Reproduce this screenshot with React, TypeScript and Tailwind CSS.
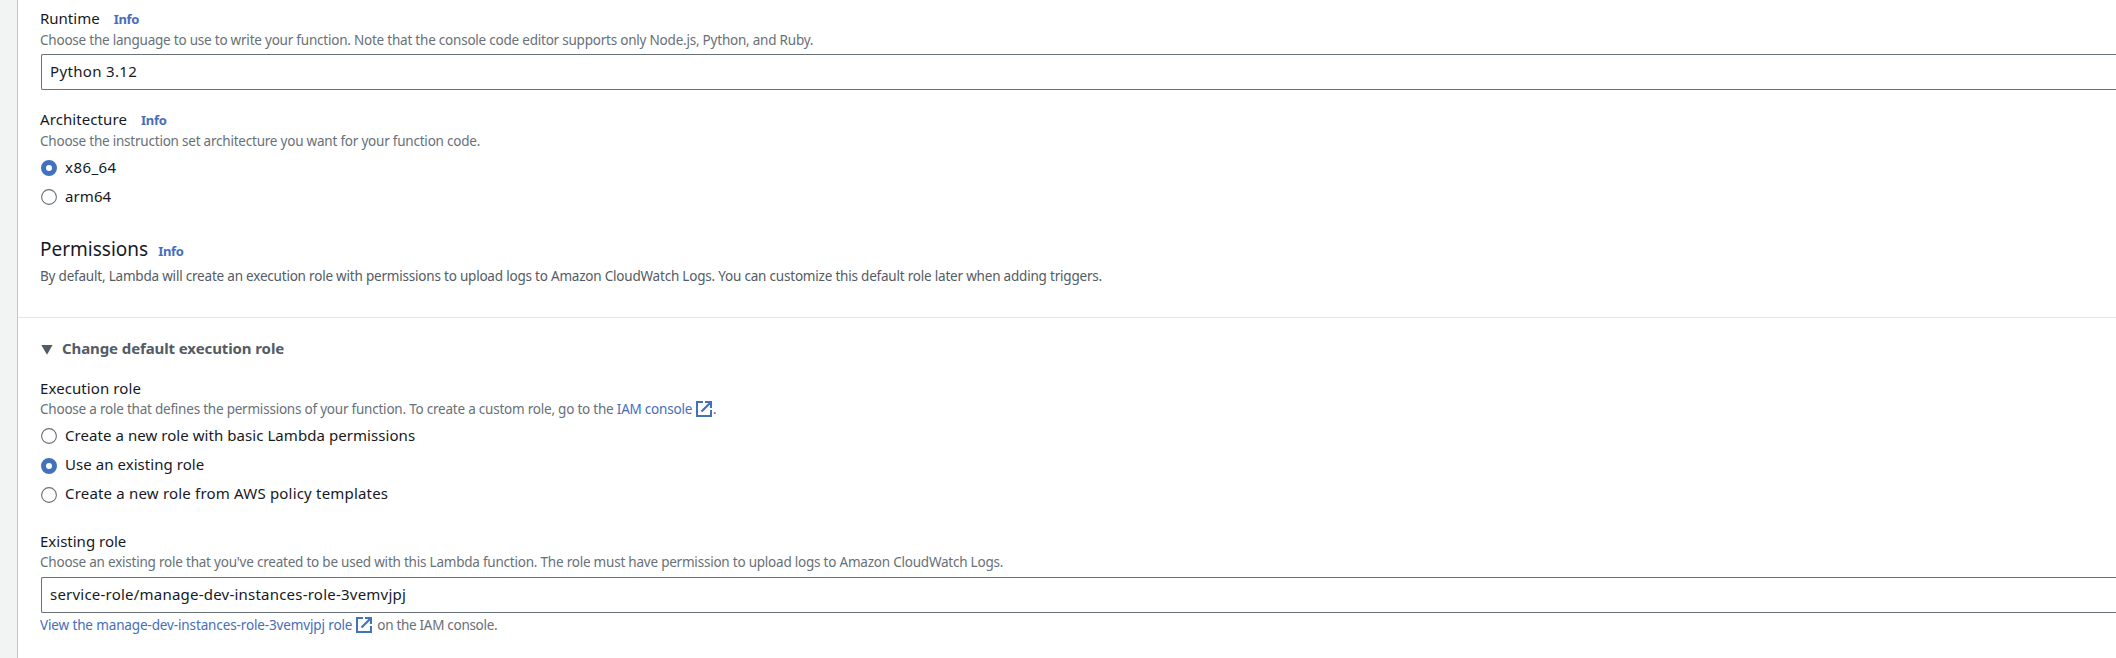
import type { ReactNode } from "react";

function Label({ children, className = "" }: { children: ReactNode; className?: string }) {
  return (
    <div className={`-ml-px flex h-[22px] items-baseline text-[15px] leading-[22px] text-[#16191f] ${className}`}>{children}</div>
  );
}

function Info({ className = "" }: { className?: string }) {
  return (
    <a href="#" className={`text-[13px] font-bold tracking-[-0.3px] text-[#466dbb] ${className}`}>
      Info
    </a>
  );
}

function Hint({
  children,
  className = "",
  color = "text-[#687078]",
}: {
  children: ReactNode;
  className?: string;
  color?: string;
}) {
  return (
    <p className={`-ml-px flex h-5 items-baseline whitespace-pre text-[13.5px] leading-5 tracking-[-0.22px] ${color} ${className}`}>
      {children}
    </p>
  );
}

function Radio({
  label,
  checked = false,
  className = "",
  dotClass = "mt-1",
  textClass = "",
}: {
  label: string;
  checked?: boolean;
  className?: string;
  dotClass?: string;
  textClass?: string;
}) {
  return (
    <label className={`flex h-[22px] items-start text-[15px] leading-[22px] text-[#16191f] ${className}`}>
      <svg viewBox="0 0 16 16" className={`mr-2 size-4 shrink-0 ${dotClass}`}>
        {checked ? (
          <circle cx="8" cy="8" r="5.5" fill="#fff" stroke="#4272bb" strokeWidth="5" />
        ) : (
          <circle cx="8" cy="8" r="7.4" fill="#fff" stroke="#687078" strokeWidth="1.1" />
        )}
      </svg>
      <span className={textClass}>{label}</span>
    </label>
  );
}

function SelectBox({ children, className = "" }: { children: ReactNode; className?: string }) {
  return (
    <div
      className={`h-9 rounded-l-[2px] border border-r-0 border-[#687078] pl-2 text-[15px] leading-[33px] text-[#16191f] ${className}`}
    >
      {children}
    </div>
  );
}

function ExternalIcon({ className = "" }: { className?: string }) {
  return (
    <svg viewBox="0 0 16 16" fill="none" stroke="#4272bb" strokeWidth="2" className={`size-4 shrink-0 ${className}`}>
      <path d="M7 1H1v14h14V9" />
      <path d="M9 1h6v6M15 1L5.5 10.5" strokeWidth="2.2" />
    </svg>
  );
}

export default function App() {
  return (
    <div className="flex h-[658px] w-full overflow-hidden bg-white font-['Noto_Sans',sans-serif]">
      <div className="w-[18px] shrink-0 border-r border-[#c6c6c6] bg-[#f2f3f3]" />
      <main className="min-w-0 flex-1">
        <section className="pt-[7px] pl-[23px]">
          <Label>
            Runtime
            <Info className="ml-[14px]" />
          </Label>
          <Hint className="mt-px">
            Choose the language to use to write your function. Note that the console code editor supports only Node.js, Python, and Ruby.
          </Hint>
          <SelectBox className="mt-1 tracking-[0.33px]">Python 3.12</SelectBox>

          <Label className="mt-[18px]">
            <span className="tracking-[0.09px]">Architecture</span>
            <Info className="ml-[14px]" />
          </Label>
          <Hint className="mt-px">Choose the instruction set architecture you want for your function code.</Hint>
          <Radio label="x86_64" checked className="mt-[5px]" textClass="tracking-[0.45px]" />
          <Radio label="arm64" className="mt-[7px]" textClass="tracking-[0.1px]" />

          <h2 className="mt-7 -ml-px flex h-7 items-baseline text-[19px] leading-7 text-[#16191f]">
            Permissions
            <Info className="ml-[10px]" />
          </h2>
          <Hint className="mt-[3px]" color="text-[#545b64]">
            <span className="tracking-[-0.205px]">
              By default, Lambda will create an execution role with permissions to upload logs to Amazon CloudWatch Logs. You can customize this default role later when adding triggers.
            </span>
          </Hint>
        </section>

        <section className="mt-[31px] border-t border-[#e6e8e8] pt-[19px] pl-[23px]">
          <div className="flex h-[22px] items-start text-[15px] leading-[22px] font-bold text-[#545b64]">
            <svg viewBox="0 0 12 10" className="mt-2 mr-[9px] h-[10px] w-3 shrink-0" fill="#545b64">
              <path d="M0.3 0h11.2L6 9.8z" />
            </svg>
            <span className="tracking-[-0.1px]">Change default execution role</span>
          </div>

          <Label className="mt-[18px]">
            <span className="tracking-[0.09px]">Execution role</span>
          </Label>
          <Hint>
            Choose a role that defines the permissions of your function. To create a custom role, go to the{" "}
            <a href="#" className="text-[#466dbb]">IAM console</a>
            <ExternalIcon className="ml-1 self-center" />
            <span className="ml-px">.</span>
          </Hint>
          <Radio label="Create a new role with basic Lambda permissions" className="mt-[5px]" textClass="tracking-[0.06px]" />
          <Radio label="Use an existing role" checked className="mt-[7px]" dotClass="mt-[5px]" textClass="tracking-[0.05px]" />
          <Radio label="Create a new role from AWS policy templates" className="mt-[7px]" dotClass="mt-[5px]" textClass="tracking-[0.19px]" />

          <Label className="mt-[26px]">Existing role</Label>
          <Hint>
            Choose an existing role that you've created to be used with this Lambda function. The role must have permission to upload logs to Amazon CloudWatch Logs.
          </Hint>
          <SelectBox className="mt-[5px] tracking-[0.22px]">service-role/manage-dev-instances-role-3vemvjpj</SelectBox>
          <Hint className="mt-[2px]">
            <a href="#" className="tracking-[-0.13px] text-[#466dbb]">View the manage-dev-instances-role-3vemvjpj role</a>
            <ExternalIcon className="ml-1 self-center" />
            <span className="ml-[5px] tracking-[-0.3px]">on the IAM console.</span>
          </Hint>
        </section>
      </main>
    </div>
  );
}
